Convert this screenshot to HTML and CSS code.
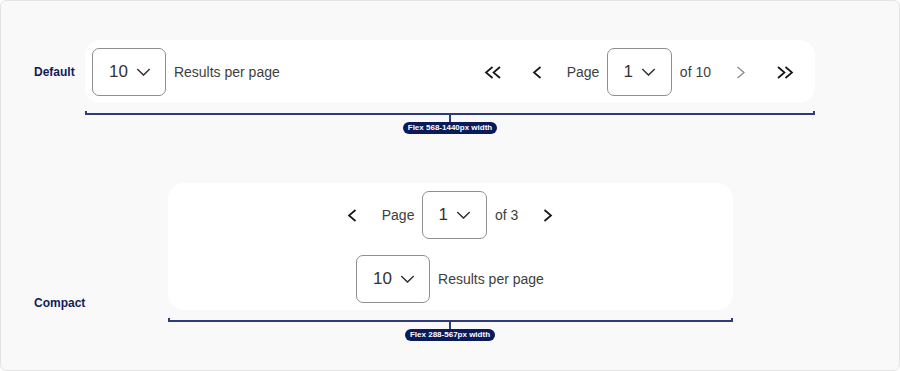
FILE: index.html
```html
<!DOCTYPE html>
<html lang="en">
<head>
    <meta charset="UTF-8">
    <meta name="viewport" content="width=device-width, initial-scale=1.0">
    <title>Pagination variants</title>
    <link rel="stylesheet" href="styles.css">
</head>
<body>

    <div class="frame">

        <!-- Default variant -->
        <section class="variant variant-default">
            <div class="label">Default</div>
            <div class="card card-default">
                <div class="per-page">
                    <div class="select select-wide">
                        <span class="select-value">10</span>
                        <svg class="chevron" width="15" height="8" viewBox="0 0 16 9"><path d="M1 1 L8 8 L15 1"/></svg>
                    </div>
                    <span class="text">Results per page</span>
                </div>
                <div class="pager">
                    <div class="icons">
                        <button class="icon-btn"><svg width="18" height="13" viewBox="0 0 18 13"><path d="M8.5 1 L2 6.5 L8.5 12 M16 1 L9.5 6.5 L16 12"/></svg></button>
                        <button class="icon-btn"><svg width="10" height="13" viewBox="0 0 10 13"><path d="M8.5 1 L2 6.5 L8.5 12"/></svg></button>
                    </div>
                    <span class="text">Page</span>
                    <div class="select">
                        <span class="select-value">1</span>
                        <svg class="chevron" width="15" height="8" viewBox="0 0 16 9"><path d="M1 1 L8 8 L15 1"/></svg>
                    </div>
                    <span class="text">of 10</span>
                    <div class="icons">
                        <button class="icon-btn disabled"><svg width="10" height="13" viewBox="0 0 10 13"><path d="M1.5 1 L8 6.5 L1.5 12"/></svg></button>
                        <button class="icon-btn"><svg width="18" height="13" viewBox="0 0 18 13"><path d="M2 1 L8.5 6.5 L2 12 M9.5 1 L16 6.5 L9.5 12"/></svg></button>
                    </div>
                </div>
            </div>
            <div class="measure">
                <div class="bracket"></div>
                <div class="tick"></div>
                <span class="pill">Flex 568-1440px width</span>
            </div>
        </section>

        <!-- Compact variant -->
        <section class="variant variant-compact">
            <div class="label">Compact</div>
            <div class="card card-compact">
                <div class="pager">
                    <button class="icon-btn"><svg width="10" height="13" viewBox="0 0 10 13"><path d="M8.5 1 L2 6.5 L8.5 12"/></svg></button>
                    <span class="text">Page</span>
                    <div class="select">
                        <span class="select-value">1</span>
                        <svg class="chevron" width="15" height="8" viewBox="0 0 16 9"><path d="M1 1 L8 8 L15 1"/></svg>
                    </div>
                    <span class="text">of 3</span>
                    <button class="icon-btn"><svg width="10" height="13" viewBox="0 0 10 13"><path d="M1.5 1 L8 6.5 L1.5 12"/></svg></button>
                </div>
                <div class="per-page">
                    <div class="select select-wide">
                        <span class="select-value">10</span>
                        <svg class="chevron" width="15" height="8" viewBox="0 0 16 9"><path d="M1 1 L8 8 L15 1"/></svg>
                    </div>
                    <span class="text">Results per page</span>
                </div>
            </div>
            <div class="measure measure-compact">
                <div class="bracket"></div>
                <div class="tick"></div>
                <span class="pill">Flex 288-567px width</span>
            </div>
        </section>

    </div>

</body>
</html>
```

FILE: styles.css
```css
body {
    margin: 0;
    padding: 0;
    font-family: "Liberation Sans", Arial, sans-serif;
    background-color: #fff;
}

.frame {
    height: 371px;
    box-sizing: border-box;
    border: 1px solid #e4e4e4;
    border-radius: 6px;
    background-color: #f9f9f9;
    padding-top: 39px;
    overflow: hidden;
}

.variant {
    display: grid;
    grid-template-columns: 51px 730px;
    padding-left: 33px;
}

.variant-compact {
    margin-top: 49px;
}

.label {
    grid-column: 1;
    grid-row: 1;
    font-size: 12px;
    font-weight: bold;
    line-height: 14px;
    color: #0e1d5a;
    align-self: center;
}

.variant-compact .label {
    align-self: end;
}

.card {
    grid-column: 2;
    grid-row: 1;
    background-color: #fff;
    border-radius: 16px;
}

.card-default {
    display: flex;
    justify-content: space-between;
    align-items: center;
    padding: 8px 8px 7px 7px;
}

.card-compact {
    width: 565px;
    justify-self: center;
    box-sizing: border-box;
    display: flex;
    flex-direction: column;
    align-items: center;
    gap: 16px;
    padding: 8px 8px 7px;
}

.per-page, .pager {
    display: flex;
    align-items: center;
    gap: 8px;
}

.icons {
    display: flex;
}

.text {
    font-size: 14px;
    color: #3e3e3e;
    white-space: nowrap;
}

.select {
    height: 48px;
    box-sizing: border-box;
    border: 1px solid #8f8f8f;
    border-radius: 7px;
    display: flex;
    align-items: center;
    gap: 8px;
    padding: 0 15px 0 15px;
}

.select-wide {
    padding: 0 14px 0 16px;
}

.select-value {
    font-size: 17px;
    color: #333;
}

.chevron path {
    fill: none;
    stroke: #333;
    stroke-width: 1.6;
}

.icon-btn {
    width: 44px;
    height: 48px;
    padding: 0;
    border: none;
    background: none;
    display: flex;
    align-items: center;
    justify-content: center;
}

.icon-btn path {
    fill: none;
    stroke: #161616;
    stroke-width: 1.7;
}

.icon-btn.disabled path {
    stroke: #8a8a8a;
    stroke-width: 1.3;
}

.measure {
    grid-column: 2;
    grid-row: 2;
    display: flex;
    flex-direction: column;
    align-items: center;
    margin-top: 8px;
}

.measure-compact {
    width: 565px;
    justify-self: center;
}

.bracket {
    align-self: stretch;
    height: 2px;
    border: 2px solid #2f3c79;
    border-top: none;
}

.tick {
    width: 2px;
    height: 7px;
    background-color: #2f3c79;
}

.pill {
    background-color: #0b1a5b;
    color: #fff;
    font-size: 8px;
    font-weight: bold;
    line-height: 12px;
    border-radius: 6px;
    padding: 0 5px;
    white-space: nowrap;
}
```
